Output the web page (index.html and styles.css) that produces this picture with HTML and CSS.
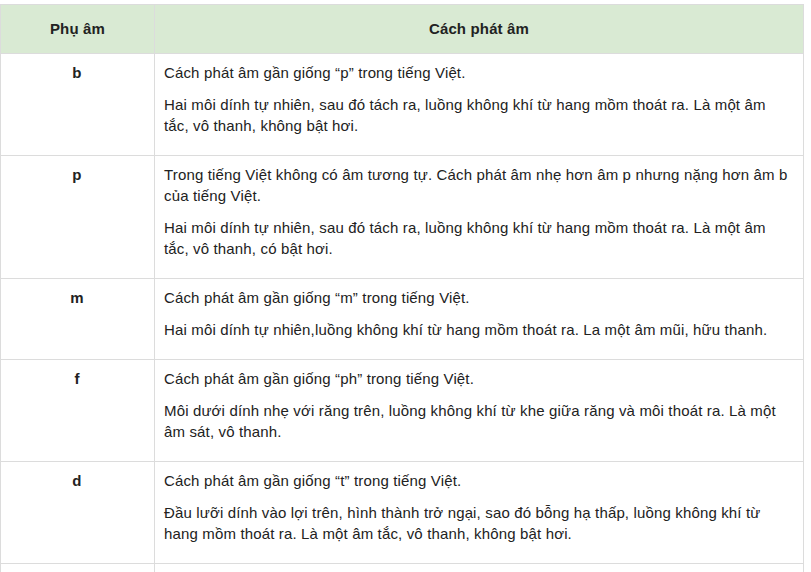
FILE: index.html
```html
<!DOCTYPE html>
<html lang="vi">
<head>
<meta charset="utf-8">
<title>Phụ âm</title>
<link rel="stylesheet" href="styles.css">
</head>
<body>
<table class="tbl">
  <colgroup><col class="c1"><col class="c2"></colgroup>
  <thead>
    <tr><th>Phụ âm</th><th>Cách phát âm</th></tr>
  </thead>
  <tbody>
    <tr>
      <td class="letter">b</td>
      <td><p>Cách phát âm gần giống “p” trong tiếng Việt.</p><p>Hai môi dính tự nhiên, sau đó tách ra, luồng không khí từ hang mồm thoát ra. Là một âm tắc, vô thanh, không bật hơi.</p></td>
    </tr>
    <tr>
      <td class="letter">p</td>
      <td><p>Trong tiếng Việt không có âm tương tự. Cách phát âm nhẹ hơn âm p nhưng nặng hơn âm b của tiếng Việt.</p><p>Hai môi dính tự nhiên, sau đó tách ra, luồng không khí từ hang mồm thoát ra. Là một âm tắc, vô thanh, có bật hơi.</p></td>
    </tr>
    <tr>
      <td class="letter">m</td>
      <td><p>Cách phát âm gần giống “m” trong tiếng Việt.</p><p>Hai môi dính tự nhiên,luồng không khí từ hang mồm thoát ra. La một âm mũi, hữu thanh.</p></td>
    </tr>
    <tr>
      <td class="letter">f</td>
      <td><p>Cách phát âm gần giống “ph” trong tiếng Việt.</p><p>Môi dưới dính nhẹ với răng trên, luồng không khí từ khe giữa răng và môi thoát ra. Là một âm sát, vô thanh.</p></td>
    </tr>
    <tr>
      <td class="letter">d</td>
      <td><p>Cách phát âm gần giống “t” trong tiếng Việt.</p><p>Đầu lưỡi dính vào lợi trên, hình thành trở ngại, sao đó bỗng hạ thấp, luồng không khí từ hang mồm thoát ra. Là một âm tắc, vô thanh, không bật hơi.</p></td>
    </tr>
    <tr class="cut">
      <td class="letter"></td>
      <td></td>
    </tr>
  </tbody>
</table>
</body>
</html>
```
FILE: styles.css
```css
html, body {
  margin: 0;
  padding: 0;
  background: #ffffff;
}
body {
  padding-top: 4px;
  font-family: "Liberation Sans", Arial, sans-serif;
  font-size: 15px;
  letter-spacing: 0.15px;
  line-height: 21px;
  color: #222222;
}
.tbl {
  border-collapse: collapse;
  width: 804px;
  table-layout: fixed;
}
.c1 { width: 154px; }
.tbl th, .tbl td {
  border: 1px solid #dcdcdc;
  vertical-align: top;
  text-align: left;
}
.tbl th {
  background: #d9ead3;
  font-weight: bold;
  text-align: center;
  padding: 13px 10px 14px;
}
.tbl td {
  padding: 8px 10px 8px 9px;
}
.tbl td.letter {
  text-align: center;
  font-weight: bold;
}
.tbl td p {
  margin: 0 0 11px;
}
.tbl tr.cut td {
  height: 40px;
}
```
